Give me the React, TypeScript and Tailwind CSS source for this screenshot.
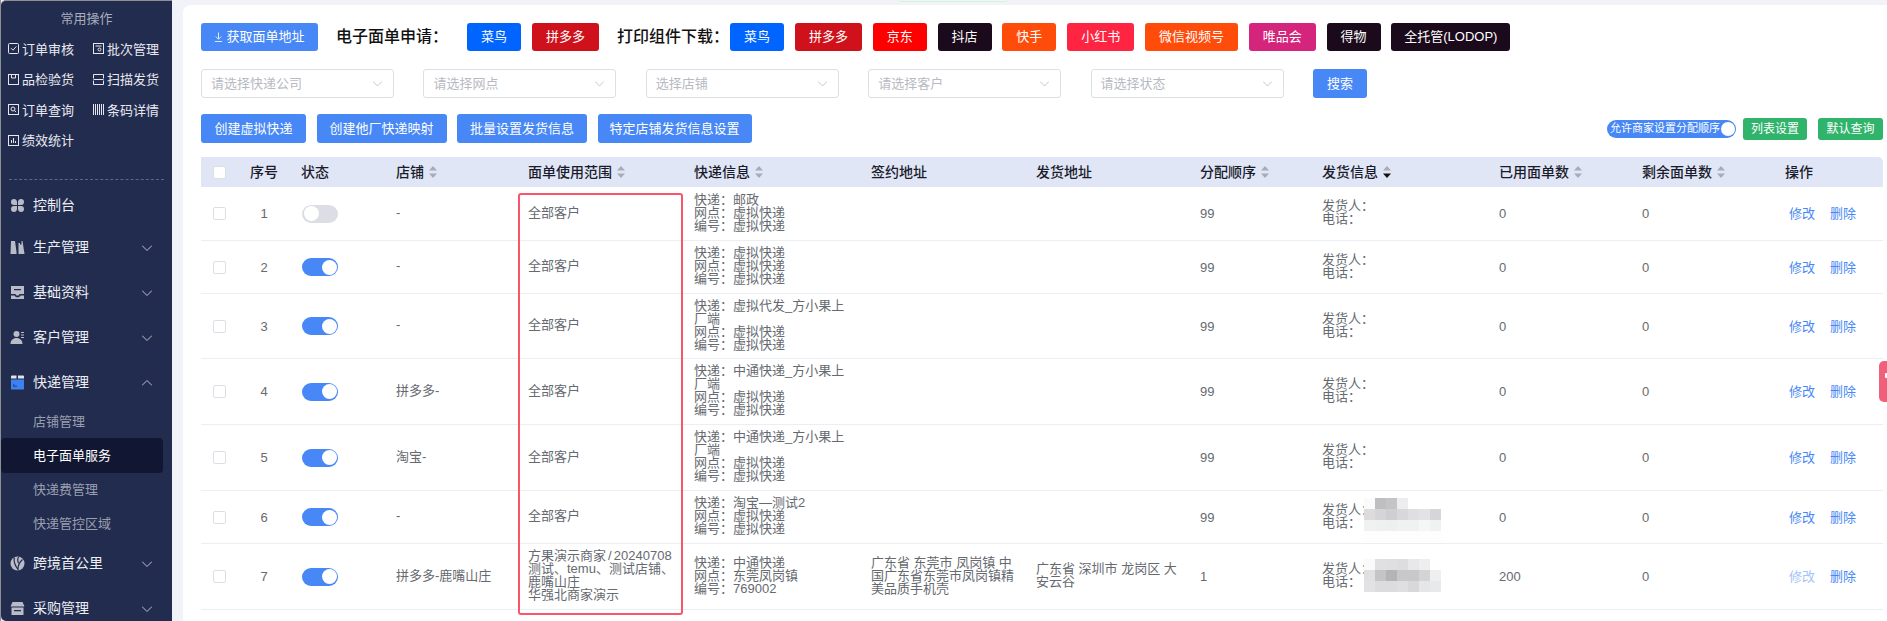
import { ReactNode } from "react";

const FONT = "font-['Liberation_Sans','Noto_Sans_CJK_SC',sans-serif]";

function OpIcon({ children }: { children: ReactNode }) {
  return (
    <svg width="12" height="12" viewBox="0 0 12 12" fill="none" stroke="#e6e7ee" strokeWidth="1" className="shrink-0">
      {children}
    </svg>
  );
}

const quickOps: { label: string; icon: ReactNode }[] = [
  { label: "订单审核", icon: <><rect x="0.5" y="0.5" width="10" height="10" rx="1" /><path d="M3 5.200l2 2 3.200-3.700" /></> },
  { label: "批次管理", icon: <><rect x="0.5" y="0.5" width="10" height="10" /><path d="M2.500 3h6" /><circle cx="6.500" cy="6.500" r="1.500" /></> },
  { label: "品检验货", icon: <><rect x="0.5" y="0.5" width="10" height="10" /><path d="M3.500 0.500v3.500h4v-3.500" /></> },
  { label: "扫描发货", icon: <><path d="M0.500 4.500v-4h10v4M0.500 6.500v4h10v-4M0.500 5.500h10" /></> },
  { label: "订单查询", icon: <><rect x="0.5" y="0.5" width="10" height="10" /><circle cx="5" cy="5" r="2" /><path d="M6.500 6.500l1.600 1.600" /></> },
  { label: "条码详情", icon: <><path d="M0.500 0v11M2.500 0v11M4.500 0v11M6.500 0v11M8.500 0v11M10.500 0v11" /></> },
  { label: "绩效统计", icon: <><rect x="0.5" y="0.5" width="10" height="10" /><path d="M3.500 8v-3M5.500 8v-5M7.500 8v-2" /></> },
];

function MenuIcon({ name }: { name: string }) {
  const c = "#b9bcc7";
  if (name === "clover")
    return (
      <svg width="15" height="15" viewBox="0 0 15 15" fill={c}>
        <path d="M1 4a3 3 0 0 1 3-3c2 0 3 1.500 3 3v3H4a3 3 0 0 1-3-3zM14 4a3 3 0 0 0-3-3c-2 0-3 1.500-3 3v3h3a3 3 0 0 0 3-3zM1 11a3 3 0 0 0 3 3c2 0 3-1.500 3-3V8H4a3 3 0 0 0-3 3zM14 11a3 3 0 0 1-3 3c-2 0-3-1.500-3-3V8h3a3 3 0 0 1 3 3z" />
      </svg>
    );
  if (name === "book")
    return (
      <svg width="15" height="15" viewBox="0 0 15 15" fill={c}>
        <path d="M1 1h4l1.500 11v2H0.500zM8.500 14V3H10v1.500h1.500V1h1l2 13z" />
      </svg>
    );
  if (name === "tray")
    return (
      <svg width="15" height="15" viewBox="0 0 15 15" fill={c}>
        <path d="M1 1h13v8H9.500c-.3 1-1 1.500-2 1.500S5.800 10 5.500 9H1zM4 4v1.200h7V4zM1 10.500h3.500c.5 1 1.500 1.800 3 1.800s2.500-.8 3-1.800H14V14H1z" />
      </svg>
    );
  if (name === "user")
    return (
      <svg width="15" height="15" viewBox="0 0 15 15" fill={c}>
        <circle cx="6.500" cy="4" r="3" />
        <path d="M0.500 14c0-3.500 2.500-6 6-6s6 2.500 6 6zM11 2h3v1h-3zM11 4.500h3v1h-3zM11 7h3v1h-3z" />
      </svg>
    );
  if (name === "box")
    return (
      <svg width="15" height="15" viewBox="0 0 15 15">
        <path d="M1 1.500a1 1 0 0 1 1-1h4.500v3H1zM8 .5h5a1 1 0 0 1 1 1v2H8z" fill="#dfe2ea" />
        <path d="M1 4.500h13V14a.5.5 0 0 1-.5.5h-12A.5.5 0 0 1 1 14z" fill="#3f80f0" />
        <path d="M3 9h1.500v1.500H7V12H3z" fill="#2557b0" />
      </svg>
    );
  if (name === "globe")
    return (
      <svg width="15" height="15" viewBox="0 0 15 15">
        <circle cx="7.500" cy="7.500" r="7" fill={c} />
        <path d="M4.500 1.500C3.500 4.500 4 8 8 13.500c0-4 1.500-7.500 4.500-10M8.500 1c-1 2-1 4 0 6" stroke="#222c4f" strokeWidth="1.200" fill="none" />
      </svg>
    );
  return (
    <svg width="15" height="15" viewBox="0 0 15 15" fill={c}>
      <path d="M2.500 1h10l2 4.500H.5zM1.500 6.500h12V14h-12zM4 9v1.200h7V9z" fillRule="evenodd" />
    </svg>
  );
}

function Chevron({ up = false, color = "#cfd2dc", size = 10 }: { up?: boolean; color?: string; size?: number }) {
  return (
    <svg width={size} height={size * 0.6} viewBox="0 0 10 6" fill="none" stroke={color} strokeWidth="0.9">
      <path d={up ? "M0 5.500l5-5 5 5" : "M0 .5l5 5 5-5"} />
    </svg>
  );
}

function TopMenu({ icon, label, arrow, up, h = "h-[45px]" }: { icon: string; label: string; arrow?: boolean; up?: boolean; h?: string }) {
  return (
    <div className={`${h} flex items-center pl-[9px] pr-[20px] text-[14px] text-[#eceef4]`}>
      <span className="w-[23px] flex">
        <MenuIcon name={icon} />
      </span>
      <span className="flex-1">{label}</span>
      {arrow && <Chevron up={up} />}
    </div>
  );
}

function Sidebar() {
  return (
    <aside className="w-[171px] shrink-0 h-full bg-[#222c4f] border-t border-[#8f9094] rounded-l-[5px] flex flex-col overflow-hidden">
      <div className="pt-[10px] text-center text-[13px] leading-[16px] text-[#a8adbd]">常用操作</div>
      <div className="grid grid-cols-[85px_1fr] pl-[7px] mt-[7px] auto-rows-[30.6px]">
        {quickOps.map((op) => (
          <div key={op.label} className="flex items-center gap-[2px] text-[13px] text-[#e8e9ef]">
            <OpIcon>{op.icon}</OpIcon>
            {op.label}
          </div>
        ))}
      </div>
      <div className="mx-[8px] mt-[23px] border-t border-dashed border-[#5e6680]" />
      <div className="mt-[5px]">
        <TopMenu icon="clover" label="控制台" h="h-[40px]" />
        <TopMenu icon="book" label="生产管理" arrow />
        <TopMenu icon="tray" label="基础资料" arrow />
        <TopMenu icon="user" label="客户管理" arrow />
        <TopMenu icon="box" label="快递管理" arrow up />
        <div className="text-[13px] text-[#9a9fb0]">
          <div className="h-[33px] flex items-center pl-[32px]">店铺管理</div>
          <div className="h-[35px] w-[162px] flex items-center pl-[32px] bg-[#111733] rounded-[4px] text-white">电子面单服务</div>
          <div className="h-[33px] flex items-center pl-[32px]">快递费管理</div>
          <div className="h-[35px] flex items-center pl-[32px]">快递管控区域</div>
        </div>
        <TopMenu icon="globe" label="跨境首公里" arrow />
        <TopMenu icon="store" label="采购管理" arrow />
      </div>
    </aside>
  );
}

const applyBtns = [
  { label: "菜鸟", bg: "bg-[#0065ff]" },
  { label: "拼多多", bg: "bg-[#cf111b]" },
];
const printBtns = [
  { label: "菜鸟", bg: "bg-[#0065ff]" },
  { label: "拼多多", bg: "bg-[#cf111b]" },
  { label: "京东", bg: "bg-[#ff0000]" },
  { label: "抖店", bg: "bg-[#1b0a1b]" },
  { label: "快手", bg: "bg-[#ff4c0a]" },
  { label: "小红书", bg: "bg-[#ff2442]" },
  { label: "微信视频号", bg: "bg-[#ff4c0a]" },
  { label: "唯品会", bg: "bg-[#d5247c]" },
  { label: "得物", bg: "bg-[#1b0a1b]" },
  { label: "全托管(LODOP)", bg: "bg-[#1b0a1b] w-[119px] !px-0" },
];

function BrandBtn({ label, bg }: { label: string; bg: string }) {
  return <button className={`h-[28px] px-[14px] rounded-[3px] text-[13px] text-white whitespace-nowrap ${bg}`}>{label}</button>;
}

function Select({ placeholder }: { placeholder: string }) {
  return (
    <div className="w-[193px] h-[29px] border border-[#dcdfe6] rounded-[3px] bg-white flex items-center justify-between pl-[9px] pr-[11px] text-[13px] text-[#b8bac3]">
      {placeholder}
      <Chevron color="#b8bac3" size={9} />
    </div>
  );
}

function Sort({ active = false }: { active?: boolean }) {
  return (
    <svg width="8" height="12" viewBox="0 0 8 12" className="ml-[5px] shrink-0">
      <path d="M4 0l4 4.500H0z" fill="#a8abb8" />
      <path d="M4 12l4-4.500H0z" fill={active ? "#111" : "#a8abb8"} />
    </svg>
  );
}

const columns: { label: string; w: string; sort?: boolean; active?: boolean; center?: boolean }[] = [
  { label: "序号", w: "w-[51px]", center: true },
  { label: "状态", w: "w-[95px]" },
  { label: "店铺", w: "w-[132px]", sort: true },
  { label: "面单使用范围", w: "w-[166px]", sort: true },
  { label: "快递信息", w: "w-[177px]", sort: true },
  { label: "签约地址", w: "w-[165px]" },
  { label: "发货地址", w: "w-[164px]" },
  { label: "分配顺序", w: "w-[122px]", sort: true },
  { label: "发货信息", w: "w-[177px]", sort: true, active: true },
  { label: "已用面单数", w: "w-[143px]", sort: true },
  { label: "剩余面单数", w: "w-[143px]", sort: true },
  { label: "操作", w: "w-[108px]" },
];

type Row = {
  h: string;
  on: boolean;
  shop: string;
  scope: string[];
  express: string[];
  contract?: string;
  ship?: string;
  order: string;
  used: string;
  mosaic?: string[][];
  editDisabled?: boolean;
};

const virt = ["网点：虚拟快递", "编号：虚拟快递"];

const rows: Row[] = [
  { h: "h-[54px]", on: false, shop: "-", scope: ["全部客户"], express: ["快递：邮政", ...virt], order: "99", used: "0" },
  { h: "h-[53px]", on: true, shop: "-", scope: ["全部客户"], express: ["快递：虚拟快递", ...virt], order: "99", used: "0" },
  { h: "h-[65px]", on: true, shop: "-", scope: ["全部客户"], express: ["快递：虚拟代发_方小果上厂端", ...virt], order: "99", used: "0" },
  { h: "h-[66px]", on: true, shop: "拼多多-", scope: ["全部客户"], express: ["快递：中通快递_方小果上厂端", ...virt], order: "99", used: "0" },
  { h: "h-[66px]", on: true, shop: "淘宝-", scope: ["全部客户"], express: ["快递：中通快递_方小果上厂端", ...virt], order: "99", used: "0" },
  {
    h: "h-[53px]",
    on: true,
    shop: "-",
    scope: ["全部客户"],
    express: ["快递：淘宝—测试2", ...virt],
    order: "99",
    used: "0",
    mosaic: [
      ["#fbfbfb", "#bfbfc1", "#c4c4c6", "#ecedec", "#ffffff", "#ffffff", "#ffffff"],
      ["#dcdcde", "#d5d5d7", "#cfcfd1", "#d8d8da", "#dfdfe1", "#e3e3e5", "#d6d6d8"],
      ["#f0f1f1", "#eff0f0", "#eeefef", "#f0f1f1", "#f0f1f1", "#f5f6f6", "#f0f1f1"],
      ["#fdfdfd", "#fdfdfd", "#fdfdfd", "#fdfdfd", "#fdfdfd", "#fdfdfd", "#fdfdfd"],
    ],
  },
  {
    h: "h-[66px]",
    on: true,
    shop: "拼多多-鹿嘴山庄",
    scope: ["方果演示商家 / 20240708", "测试、temu、测试店铺、鹿嘴山庄", "华强北商家演示"],
    express: ["快递：中通快递", "网点：东莞凤岗镇", "编号：769002"],
    contract: "广东省 东莞市 凤岗镇 中国广东省东莞市凤岗镇精美品质手机壳",
    ship: "广东省 深圳市 龙岗区 大安云谷",
    order: "1",
    used: "200",
    editDisabled: true,
    mosaic: [
      ["#fafafa", "#e0e0e2", "#dfdfe1", "#dddddf", "#e8e8ea", "#eeeeef", "#ffffff"],
      ["#e0e0e2", "#c4c4c6", "#b4b4b6", "#c8c8ca", "#c8c8ca", "#d4d4d6", "#eef0f0"],
      ["#e2e2e4", "#dcdcde", "#dcdcde", "#dfdfe1", "#d8d8da", "#e6e6e8", "#e8eaea"],
    ],
  },
];

function Toggle({ on }: { on: boolean }) {
  return (
    <div className={`w-[36px] h-[18px] rounded-full flex items-center px-[1.500px] ${on ? "bg-[#4788f6] justify-end" : "bg-[#dcdee5] justify-start"}`}>
      <div className="w-[15px] h-[15px] rounded-full bg-white" />
    </div>
  );
}

function Check({ bg = "" }: { bg?: string }) {
  return <div className={`w-[13px] h-[13px] rounded-[2px] border border-[#dcdfe6] ${bg}`} />;
}

const cell = "px-[10px] py-0 border-b border-[#eceef5] align-middle";
// 中文行比数字略高一点
const textCell = `${cell} pb-[3px]`;

function DataTable() {
  return (
    <div className="relative mt-[14px]">
      <table className="w-[1682px] table-fixed border-separate border-spacing-0 text-[13px] leading-[13px] text-[#666a70]">
        <thead>
          <tr className="h-[30px] bg-[#e1e6f6] text-[14px] text-[#1a1c2b] font-medium">
            <th className="w-[39px] pl-[12px]">
              <Check bg="bg-white" />
            </th>
            {columns.map((c) => (
              <th key={c.label} className={`${c.w} px-[10px] ${c.center ? "text-center pr-[13px]" : "text-left"} font-medium last:rounded-tr-[5px]`}>
                <div className={`flex items-center ${c.center ? "justify-center" : ""}`}>
                  {c.label}
                  {c.sort && <Sort active={c.active} />}
                </div>
              </th>
            ))}
          </tr>
        </thead>
        <tbody>
          {rows.map((r, i) => (
            <tr key={i} className={r.h}>
              <td className="pl-[12px] border-b border-[#eceef5]">
                <Check />
              </td>
              <td className={`${cell} text-center pr-[13px]`}>{i + 1}</td>
              <td className={`${cell} pl-[11px]`}>
                <Toggle on={r.on} />
              </td>
              <td className={textCell}>{r.shop}</td>
              <td className={`${textCell} pr-[8px] [word-spacing:-1.500px]`}>
                {r.scope.map((s) => (
                  <div key={s}>{s}</div>
                ))}
              </td>
              <td className={textCell}>
                {r.express.map((s) => (
                  <div key={s}>{s}</div>
                ))}
              </td>
              <td className={textCell}>{r.contract}</td>
              <td className={textCell}>{r.ship}</td>
              <td className={cell}>{r.order}</td>
              <td className={textCell}>
                <div className="relative">
                  <div>发货人：</div>
                  <div>电话：</div>
                  {r.mosaic && (
                    <div className={`absolute left-[42px] ${r.mosaic.length === 4 ? "top-[-5px]" : "top-[-3px]"} grid grid-cols-[repeat(7,11px)] auto-rows-[11px]`}>
                      {r.mosaic.flat().map((color, k) => (
                        <div key={k} style={{ backgroundColor: color }} />
                      ))}
                    </div>
                  )}
                </div>
              </td>
              <td className={cell}>{r.used}</td>
              <td className={cell}>0</td>
              <td className={`${cell} text-[#4788f6]`}>
                <span className={`ml-[4px] mr-[15px] ${r.editDisabled ? "text-[#a3c3f9]" : ""}`}>修改</span>
                <span>删除</span>
              </td>
            </tr>
          ))}
        </tbody>
      </table>
      {/* 红框标注 */}
      <div className="absolute left-[317px] top-[36px] w-[165px] h-[422px] border-2 border-[#f9566b] rounded-[3px] pointer-events-none" />
    </div>
  );
}

export default function App() {
  return (
    <div className={`relative w-full h-[621px] overflow-hidden flex bg-[#f2f3f8] border-l border-[#8f9094] ${FONT}`}>
      <Sidebar />
      <main className="ml-[11px] mt-[5px] flex-1 min-w-0 bg-white rounded-tl-[8px] pl-[18px] pt-[18px]">
        <div className="flex items-center">
          <button className="w-[117px] h-[28px] rounded-[3px] bg-[#4788f6] text-[13px] text-white flex items-center justify-center gap-[3px]">
            <svg width="9" height="10" viewBox="0 0 10 11" fill="none" stroke="white" strokeWidth="0.9">
              <path d="M5 0.500v7M2 5l3 3 3-3M1 10.500h8" />
            </svg>
            获取面单地址
          </button>
          <div className="ml-[18px] mr-[19px] text-[16px] font-medium text-[#111]">电子面单申请：</div>
          <div className="flex gap-[11px]">
            {applyBtns.map((b) => (
              <BrandBtn key={b.label} {...b} />
            ))}
          </div>
          <div className="ml-[18px] mr-[1px] text-[16px] font-medium text-[#111]">打印组件下载：</div>
          <div className="flex gap-[10.800px]">
            {printBtns.map((b) => (
              <BrandBtn key={b.label} {...b} />
            ))}
          </div>
        </div>
        <div className="flex items-center gap-[29.400px] mt-[18px]">
          <Select placeholder="请选择快递公司" />
          <Select placeholder="请选择网点" />
          <Select placeholder="选择店铺" />
          <Select placeholder="请选择客户" />
          <Select placeholder="请选择状态" />
          <button className="w-[54px] h-[29px] rounded-[3px] bg-[#4788f6] text-[13px] text-white">搜索</button>
        </div>
        <div className="flex items-center mt-[16px] w-[1682px]">
          <div className="flex gap-[10.500px] flex-1">
            <button className="w-[105px] h-[29px] rounded-[3px] bg-[#4788f6] text-[13px] text-white">创建虚拟快递</button>
            <button className="w-[130px] h-[29px] rounded-[3px] bg-[#4788f6] text-[13px] text-white">创建他厂快递映射</button>
            <button className="w-[130px] h-[29px] rounded-[3px] bg-[#4788f6] text-[13px] text-white">批量设置发货信息</button>
            <button className="w-[154px] h-[29px] rounded-[3px] bg-[#4788f6] text-[13px] text-white">特定店铺发货信息设置</button>
          </div>
          <div className="w-[129px] h-[18px] rounded-full bg-[#4788f6] flex items-center justify-between pl-[3px] pr-[1.500px] text-[11px] text-white whitespace-nowrap">
            允许商家设置分配顺序
            <div className="w-[14px] h-[14px] rounded-full bg-white shrink-0" />
          </div>
          <button className="ml-[7px] w-[64px] h-[22px] rounded-[3px] bg-[#30b36a] text-[12px] text-white">列表设置</button>
          <button className="ml-[11px] w-[65px] h-[22px] rounded-[3px] bg-[#30b36a] text-[12px] text-white">默认查询</button>
        </div>
        <DataTable />
      </main>
      {/* 顶部浅绿标签 + 右侧悬浮条 */}
      <div className="absolute left-[899px] top-0 w-[107px] h-[2px] bg-[#eef9f1] border-b border-x border-[#d5f0dd] rounded-b-[2px]" />
      <div className="absolute right-0 top-[361px] w-[8px] h-[41px] bg-[#f0607a] rounded-l-[5px] flex items-center justify-end pb-[12px]">
        <div className="w-[2px] h-[5px] bg-white rounded-l-[1px]" />
      </div>
    </div>
  );
}
